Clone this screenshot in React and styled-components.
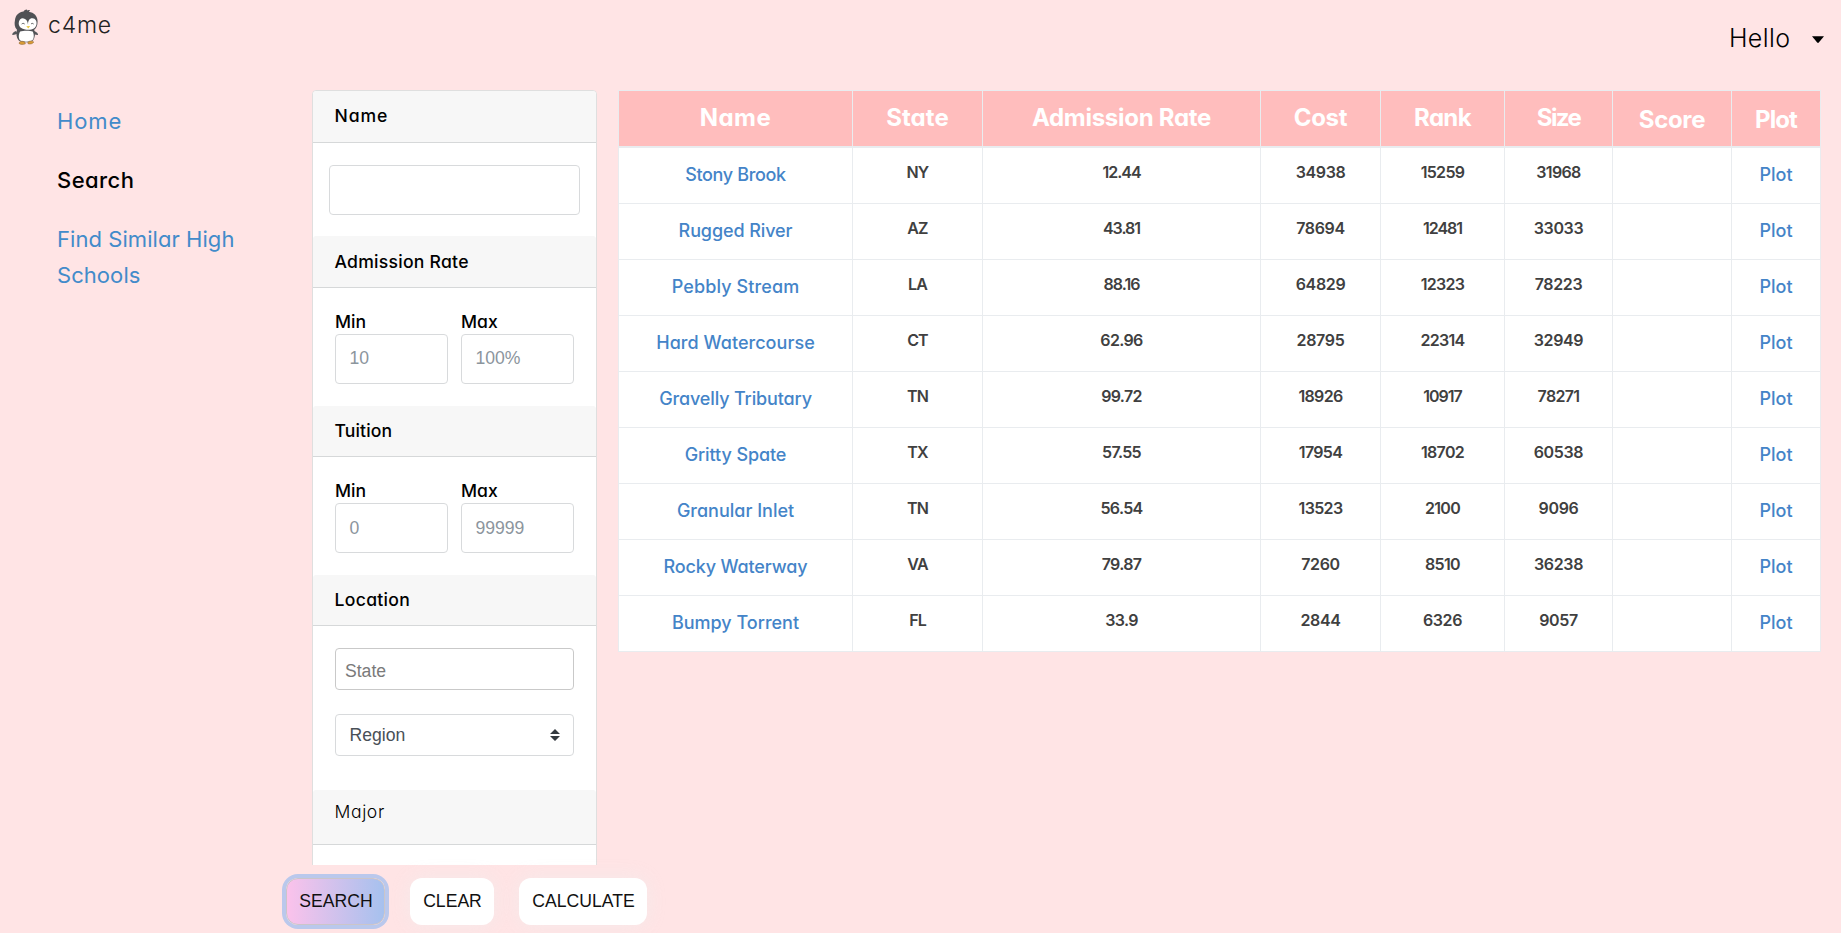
import React from 'react';
import styled, { createGlobalStyle } from 'styled-components';

const GlobalStyle = createGlobalStyle`
  *, *::before, *::after { box-sizing: border-box; }
  html, body, #root { height: 100%; }
  body {
    margin: 0;
    overflow: hidden;
    background: #ffe4e5;
    color: #000;
    font-family: Inter, "Open Sans", sans-serif;
    font-feature-settings: "cv11";
  }
`;

const Page = styled.div`
  display: flex;
  flex-direction: column;
  height: 100%;
`;

const TopBar = styled.header`
  display: flex;
  justify-content: space-between;
  align-items: flex-start;
  height: 90px;
  padding: 5px 17px 0 12px;
`;

const Brand = styled.div`
  display: flex;
  align-items: center;
  gap: 9px;
  height: 40px;
  font-size: 23px;
  font-weight: 300;
  line-height: 40px;
  letter-spacing: 0.8px;
  color: #222;
  svg { display: block; margin-top: 3px; }
`;

const UserMenu = styled.div`
  display: flex;
  align-items: center;
  gap: 21.5px;
  height: 38px;
  margin-top: 14px;
  font-size: 25px;
  font-weight: 300;
  line-height: 38px;
  letter-spacing: 0.41px;
  svg { display: block; margin-top: 3px; }
`;

const Content = styled.main`
  display: flex;
  flex: 1;
  min-height: 0;
  align-items: flex-start;
`;

const SideNav = styled.nav`
  display: flex;
  flex-direction: column;
  gap: 23px;
  width: 286px;
  padding: 13px 36px 0 57px;
`;

const NavLink = styled.a`
  font-size: 22px;
  line-height: 36px;
  font-weight: ${(p) => (p.$active ? 500 : 400)};
  color: ${(p) => (p.$active ? '#000' : '#428bca')};
`;

const Tracked = styled.span`
  letter-spacing: ${(p) => p.$ls}px;
`;

const FilterColumn = styled.section`
  display: flex;
  flex-direction: column;
  width: 332px;
`;

const FilterScroller = styled.div`
  width: 285px;
  height: 775px;
  margin-left: 26px;
  overflow: hidden;
`;

const FilterCard = styled.div`
  height: 900px;
  border: 1px solid #dfdfdf;
  border-radius: 4px;
  background: #fff;
  overflow: hidden;
`;

const FilterHeader = styled.div`
  height: ${(p) => p.$h}px;
  padding-left: 21.5px;
  border-bottom: 1px solid #d6d8d9;
  border-radius: 3px 3px 0 0;
  background: #f7f7f7;
  font-size: 17.6px;
  font-weight: ${(p) => (p.$light ? 300 : 500)};
  line-height: ${(p) => p.$line || 50}px;
`;

const FilterBody = styled.div`
  display: flex;
  flex-direction: column;
  gap: 24px;
  height: ${(p) => p.$h}px;
  padding: 22px ${(p) => p.$side || 22}px 0;
`;

const RangeRow = styled.div`
  display: flex;
  gap: 13px;
  margin-top: -1px;
`;

const RangeField = styled.label`
  display: flex;
  flex-direction: column;
  width: 113px;
  font-size: 17.6px;
  font-weight: 500;
  line-height: 26px;
`;

const RangeLabel = styled.span`
  height: 25px;
`;

const TextInput = styled.input`
  width: 100%;
  height: ${(p) => p.$h || 50}px;
  padding: ${(p) => (p.$plain ? '4px 9px 0' : '0 13.4px')};
  padding-bottom: ${(p) => (p.$raised ? 2 : 0)}px;
  border: 1px solid ${(p) => (p.$plain ? '#c9c9c9' : '#d8dadc')};
  border-radius: 4px;
  background: #fff;
  outline: none;
  font-family: "Liberation Sans", Arial, sans-serif;
  font-size: 17.6px;
  &::placeholder {
    color: ${(p) => (p.$plain ? '#7a7a7a' : '#8c959d')};
    opacity: 1;
  }
`;

const Select = styled.div`
  display: flex;
  align-items: center;
  justify-content: space-between;
  height: 42px;
  padding: 0 13px 0 13.5px;
  border: 1px solid #d8dadc;
  border-radius: 4px;
  font-family: "Liberation Sans", Arial, sans-serif;
  font-size: 17.6px;
  color: #495057;
`;

const ButtonRow = styled.div`
  display: flex;
  gap: 25px;
  margin-top: 13px;
`;

const ActionButton = styled.button`
  flex: none;
  width: ${(p) => p.$w}px;
  height: 47px;
  padding: 0 0 0 1px;
  border: ${(p) => (p.$focused ? '1px solid #cbc5c9' : 'none')};
  border-radius: 12px;
  background: ${(p) => (p.$focused ? 'linear-gradient(to right, #fbc2eb 0%, #a6c1ee 100%)' : '#fff')};
  box-shadow: ${(p) => (p.$focused ? '0 0 0 4px #bac8ec' : '0 0 20px rgba(238, 238, 238, 0.6)')};
  font-family: "Liberation Sans", Arial, sans-serif;
  font-size: 17.6px;
  color: #111;
`;

const Table = styled.table`
  width: 1203px;
  table-layout: fixed;
  border-collapse: separate;
  border-spacing: 0;
  border-top: 1px solid #e9ecef;
  border-left: 1px solid #e9ecef;
  background: #fff;
  text-align: center;
`;

const HeadCell = styled.th`
  height: 57px;
  padding: ${(p) => (p.$low ? 3 : 0)}px 0 0;
  vertical-align: top;
  border-right: 1px solid #e9ecef;
  border-bottom: 2px solid #e9ecef;
  background: #ffbdbd;
  color: #fff;
  font-size: 24px;
  font-weight: 700;
  line-height: ${(p) => (p.$low ? 52 : 54)}px;
`;

const Cell = styled.td`
  height: 56px;
  padding: 0;
  vertical-align: top;
  border-right: 1px solid #e9ecef;
  border-bottom: 1px solid #e9ecef;
  color: #404040;
  font-size: 16px;
  font-weight: 600;
  line-height: 48px;
`;

const CellLink = styled.a`
  display: block;
  color: #4484c8;
  font-size: 18px;
  font-weight: 550;
  line-height: 53px;
`;

const Penguin = () => (
  <svg width="27" height="36" viewBox="0 0 27 36" aria-hidden="true">
    <path d="M4 22 C1.5 22.5 0 24.5 .3 26 C2 26.2 4 25.4 5.5 24.6Z M22 22 C24.6 22.5 26.3 24.6 26 26 C24 26.3 22.4 25.4 21 24.6Z" fill="#55565a" />
    <path d="M3 11 C3.5 5.5 7.5 2.9 11.5 2.4 C12 1.2 13.5.4 15 .4 L15.2 1.6 C16 1 17.4.9 18 1.4 L16.8 2.8 C22 3.6 25.6 7 25.6 12.5 C25.6 17 24 19.5 22.2 20.8 C23.6 24.5 23 29 21 31.5 C17 34 10 34 6.5 31.3 C4.4 28.7 3.8 24 5 20.8 C2.5 18.5 2.2 14.5 3 11Z" fill="#505155" />
    <path d="M16.2 16.6 C15.4 11.8 17.6 9.2 20.4 9.3 C23.6 9.5 25 12.3 24.5 15.2 C23.8 19 20.8 20.8 16.4 20.8 C10.5 20.8 6.7 18.6 6.7 14.3 C6.7 11.2 9 9.1 11.4 9.4 C14.4 9.7 15.7 12.2 16.2 16.6Z" fill="#fff" />
    <path d="M8.2 22.5 C11 21.5 18 21.5 20.7 22.4 C22.5 26 22 30.2 19.5 31.7 C16.2 33 11 33 8.3 31.5 C6.2 29.5 6.4 25 8.2 22.5Z" fill="#fff" />
    <path d="M9.7 15 C10.6 14.2 11.8 14.2 12.6 15 M19 15 C19.8 14.2 20.9 14.2 21.6 15" fill="none" stroke="#56575a" strokeWidth="1" />
    <path d="M14.3 17.2 L18.1 17 L16.3 19.5Z" fill="#e8c63c" />
    <path d="M7 34.4 C7.2 32.4 9.5 31.5 12.8 33 L13.4 34.8 C11.5 35.8 8.4 35.7 7 34.4Z M15.8 33.2 C17.8 31.5 20.4 31.6 21.8 33 C21.2 34.6 18 35.6 16 34.7Z" fill="#d99b35" stroke="#8c6840" strokeWidth=".5" />
  </svg>
);

const Caret = () => (
  <svg width="12" height="7" viewBox="0 0 12 7" aria-hidden="true">
    <path d="M0 .2 H12 L6.8 6.6 Q6 7.2 5.2 6.6Z" fill="#000" />
  </svg>
);

const SortArrows = () => (
  <svg width="10" height="12" viewBox="0 0 10 12" aria-hidden="true">
    <path d="M0 5 L5 0 L10 5Z M0 7 L5 12 L10 7Z" fill="#343a40" />
  </svg>
);

const Range = ({ min, max, raised }) => (
  <RangeRow>
    <RangeField>
      <RangeLabel>Min</RangeLabel>
      <TextInput placeholder={min} $raised={raised} />
    </RangeField>
    <RangeField>
      <RangeLabel>Max</RangeLabel>
      <TextInput placeholder={max} $raised={raised} />
    </RangeField>
  </RangeRow>
);

const columns = [
  { label: 'Name', width: 234, ls: 0.5 },
  { label: 'State', width: 130, ls: 0.1 },
  { label: 'Admission Rate', width: 278, ls: -0.28 },
  { label: 'Cost', width: 120, ls: -0.3 },
  { label: 'Rank', width: 124, ls: -0.65 },
  { label: 'Size', width: 108, ls: -1.6 },
  { label: 'Score', width: 119, ls: -0.3, low: true },
  { label: 'Plot', width: 89, ls: -0.9, low: true },
];

const schools = [
  { name: 'Stony Brook', ls: -0.35, values: ['NY', '12.44', '34938', '15259', '31968'] },
  { name: 'Rugged River', ls: -0.1, values: ['AZ', '43.81', '78694', '12481', '33033'] },
  { name: 'Pebbly Stream', ls: 0.1, values: ['LA', '88.16', '64829', '12323', '78223'] },
  { name: 'Hard Watercourse', ls: 0.05, values: ['CT', '62.96', '28795', '22314', '32949'] },
  { name: 'Gravelly Tributary', ls: -0.14, values: ['TN', '99.72', '18926', '10917', '78271'] },
  { name: 'Gritty Spate', ls: -0.1, values: ['TX', '57.55', '17954', '18702', '60538'] },
  { name: 'Granular Inlet', ls: 0, values: ['TN', '56.54', '13523', '2100', '9096'] },
  { name: 'Rocky Waterway', ls: -0.15, values: ['VA', '79.87', '7260', '8510', '36238'] },
  { name: 'Bumpy Torrent', ls: 0, values: ['FL', '33.9', '2844', '6326', '9057'] },
];

// Narrow glyphs (ones and decimal points) tighten the whole figure.
const tracking = (text) => {
  if (/^[A-Z]+$/.test(text)) return -0.9;
  return -0.35 - 0.32 * (text.match(/[1.]/g) || []).length;
};

export default function App() {
  return (
    <Page>
      <GlobalStyle />
      <TopBar>
        <Brand>
          <Penguin />
          <span>c4me</span>
        </Brand>
        <UserMenu>
          <span>Hello</span>
          <Caret />
        </UserMenu>
      </TopBar>
      <Content>
        <SideNav>
          <NavLink><Tracked $ls={0.9}>Home</Tracked></NavLink>
          <NavLink $active><Tracked $ls={0.45}>Search</Tracked></NavLink>
          <NavLink><Tracked $ls={0.06}>Find Similar High Schools</Tracked></NavLink>
        </SideNav>
        <FilterColumn>
          <FilterScroller>
            <FilterCard>
              <FilterHeader $h={52}><Tracked $ls={0.9}>Name</Tracked></FilterHeader>
              <FilterBody $h={93} $side={16}>
                <TextInput />
              </FilterBody>
              <FilterHeader $h={52} $line={52}><Tracked $ls={0.25}>Admission Rate</Tracked></FilterHeader>
              <FilterBody $h={118}>
                <Range min="10" max="100%" raised />
              </FilterBody>
              <FilterHeader $h={51}><Tracked $ls={0.12}>Tuition</Tracked></FilterHeader>
              <FilterBody $h={118}>
                <Range min="0" max="99999" />
              </FilterBody>
              <FilterHeader $h={51}><Tracked $ls={0.3}>Location</Tracked></FilterHeader>
              <FilterBody $h={164}>
                <TextInput $h={42} $plain placeholder="State" />
                <Select>
                  Region
                  <SortArrows />
                </Select>
              </FilterBody>
              <FilterHeader $h={55} $line={43} $light><Tracked $ls={0.6}>Major</Tracked></FilterHeader>
            </FilterCard>
          </FilterScroller>
          <ButtonRow>
            <ActionButton $w={99} $focused>SEARCH</ActionButton>
            <ActionButton $w={84}>CLEAR</ActionButton>
            <ActionButton $w={128}>CALCULATE</ActionButton>
          </ButtonRow>
        </FilterColumn>
        <Table>
          <colgroup>
            {columns.map((c) => <col key={c.label} width={c.width} />)}
          </colgroup>
          <thead>
            <tr>
              {columns.map((c) => (
                <HeadCell key={c.label} $low={c.low}><Tracked $ls={c.ls}>{c.label}</Tracked></HeadCell>
              ))}
            </tr>
          </thead>
          <tbody>
            {schools.map((s) => (
              <tr key={s.name}>
                <Cell><CellLink><Tracked $ls={s.ls}>{s.name}</Tracked></CellLink></Cell>
                {s.values.map((v, i) => (
                  <Cell key={i}><Tracked $ls={tracking(v)}>{v}</Tracked></Cell>
                ))}
                <Cell />
                <Cell><CellLink>Plot</CellLink></Cell>
              </tr>
            ))}
          </tbody>
        </Table>
      </Content>
    </Page>
  );
}
